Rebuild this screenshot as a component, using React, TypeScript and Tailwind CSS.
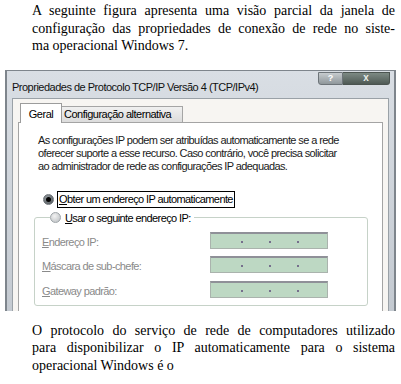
import React from 'react';

// ── Text blocks around the screenshot ──────────────────────────────────────

const INTRO = [
  'A seguinte figura apresenta uma visão parcial da janela de',
  'configuração das propriedades de conexão de rede no siste-',
  'ma operacional Windows 7.',
];

const QUESTION = [
  'O protocolo do serviço de rede de computadores utilizado',
  'para disponibilizar o IP automaticamente para o sistema',
  'operacional Windows é o',
];

function Paragraph({ lines, className = '' }: { lines: string[]; className?: string }) {
  return (
    <div
      className={`pl-[32px] pr-[6px] font-['Liberation_Serif','Times_New_Roman',serif] text-[14px] leading-[17.5px] text-black ${className}`}
    >
      {lines.map((line, i) => (
        <div
          key={i}
          className={i < lines.length - 1 ? 'text-justify [text-align-last:justify]' : 'text-left'}
        >
          {line}
        </div>
      ))}
    </div>
  );
}

// ── Dialog pieces ──────────────────────────────────────────────────────────

function Radio({ checked }: { checked?: boolean }) {
  if (checked) {
    return (
      <span className="flex h-[11px] w-[11px] flex-shrink-0 items-center justify-center rounded-full border border-[#6f757a] bg-[radial-gradient(circle_at_40%_35%,#9aa0a4,#4a5054)]">
        <span className="h-[5px] w-[5px] rounded-full bg-black" />
      </span>
    );
  }
  return (
    <span className="h-[11px] w-[11px] flex-shrink-0 rounded-full border border-[#9ea4a8] bg-[radial-gradient(circle_at_40%_35%,#f2f2f2,#b8bcbf)]" />
  );
}

function Accel({ first, rest }: { first: string; rest: string }) {
  return (
    <span>
      <span className="underline underline-offset-[1px]">{first}</span>
      {rest}
    </span>
  );
}

function IpField() {
  return (
    <div className="relative h-[17px] w-[118px] border border-[#aab3ad] border-t-[2px] border-t-[#8f9098] bg-[#bdd8c3]">
      {/* octet separators */}
      <span className="absolute left-[30px] top-[7px] h-[2px] w-[2px] bg-[#756f8c]" />
      <span className="absolute left-[58px] top-[7px] h-[2px] w-[2px] bg-[#756f8c]" />
      <span className="absolute left-[86px] top-[7px] h-[2px] w-[2px] bg-[#756f8c]" />
    </div>
  );
}

function FieldRow({ first, rest }: { first: string; rest: string }) {
  return (
    <div className="flex items-start">
      <div className="w-[168px] pt-[3px] leading-[14px] text-[#8a8a8a]">
        <Accel first={first} rest={rest} />
      </div>
      <IpField />
    </div>
  );
}

function Window() {
  return (
    <div className="ml-[5px] mt-[15px] flex h-[241px] w-[391px] flex-col overflow-hidden border-x-[2px] border-t border-[#7e858c] bg-[linear-gradient(180deg,#d9dee4,#c4cad1)] font-['Liberation_Sans',Arial,sans-serif] text-[11px] tracking-[-0.6px] text-black">
      {/* Title bar */}
      <div className="flex h-[27px] flex-shrink-0 items-start">
        <div className="ml-[5px] mt-[9px] leading-[14px] tracking-[-0.5px] text-[#111]">
          Propriedades de Protocolo TCP/IP Versão 4 (TCP/IPv4)
        </div>
        <div className="ml-auto mr-[4px] mt-[1px] flex">
          <div className="flex h-[13px] w-[25px] items-center justify-center rounded-bl-[3px] border border-[#6d7479] bg-[linear-gradient(180deg,#c6cbce,#8f979b)] text-[9px] font-bold leading-none tracking-normal text-white">
            ?
          </div>
          <div className="flex h-[13px] w-[47px] items-center justify-center rounded-br-[3px] border border-l-0 border-[#4b5450] bg-[linear-gradient(180deg,#7d8a84,#4f5a55)] text-[10px] font-bold leading-none tracking-normal text-[#e8ece8]">
            x
          </div>
        </div>
      </div>

      {/* Client area */}
      <div className="mx-[5px] flex flex-1 flex-col border-x border-t border-[#9aa1a7] bg-[#f7f5f2] px-[5px] pt-[4px]">
        {/* Tabs */}
        <div className="relative z-10 flex items-end tracking-[-0.5px]">
          <div className="-mb-px ml-[2px] flex h-[20px] w-[42px] items-center justify-center border border-b-0 border-[#9c9c9c] bg-white pt-[1px] leading-[14px]">
            Geral
          </div>
          <div className="flex h-[16px] w-[121px] items-center border border-b-0 border-l-0 border-[#a5a5a5] bg-[linear-gradient(180deg,#f0f0f0,#dcdcdc)] pl-[2px] leading-[14px]">
            Configuração alternativa
          </div>
        </div>

        {/* Tab panel */}
        <div className="flex flex-1 flex-col border border-b-0 border-[#a4a4a4] bg-white pl-[19px] pr-[14px] pt-[11px]">
          <div className="leading-[13px] text-[#1a1a1a]">
            <div>As configurações IP podem ser atribuídas automaticamente se a rede</div>
            <div>oferecer suporte a esse recurso. Caso contrário, você precisa solicitar</div>
            <div>ao administrador de rede as configurações IP adequadas.</div>
          </div>

          <div className="ml-[5px] mt-[18px] flex items-center gap-[3px]">
            <Radio checked />
            <div className="border border-black px-[1px] leading-[15px]">
              <Accel first="O" rest="bter um endereço IP automaticamente" />
            </div>
          </div>

          <fieldset className="-ml-[4px] mt-[3px] rounded-[3px] border border-[#c6d2c8] pb-[7px] pl-[7px]">
            <legend className="ml-[8px] pr-[3px]">
              <span className="flex items-center gap-[4px] leading-[14px]">
                <Radio />
                <Accel first="U" rest="sar o seguinte endereço IP:" />
              </span>
            </legend>
            <div className="flex flex-col gap-[7.5px] pt-[7px]">
              <FieldRow first="E" rest="ndereço IP:" />
              <FieldRow first="M" rest="áscara de sub-chefe:" />
              <FieldRow first="G" rest="ateway padrão:" />
            </div>
          </fieldset>
        </div>
      </div>
    </div>
  );
}

// ── Page ───────────────────────────────────────────────────────────────────

export default function App(): React.ReactElement {
  return (
    <div className="h-[384px] w-[401px] overflow-hidden bg-white">
      <Paragraph lines={INTRO} className="pt-[2px]" />
      <Window />
      <Paragraph lines={QUESTION} className="mt-[11px]" />
    </div>
  );
}
